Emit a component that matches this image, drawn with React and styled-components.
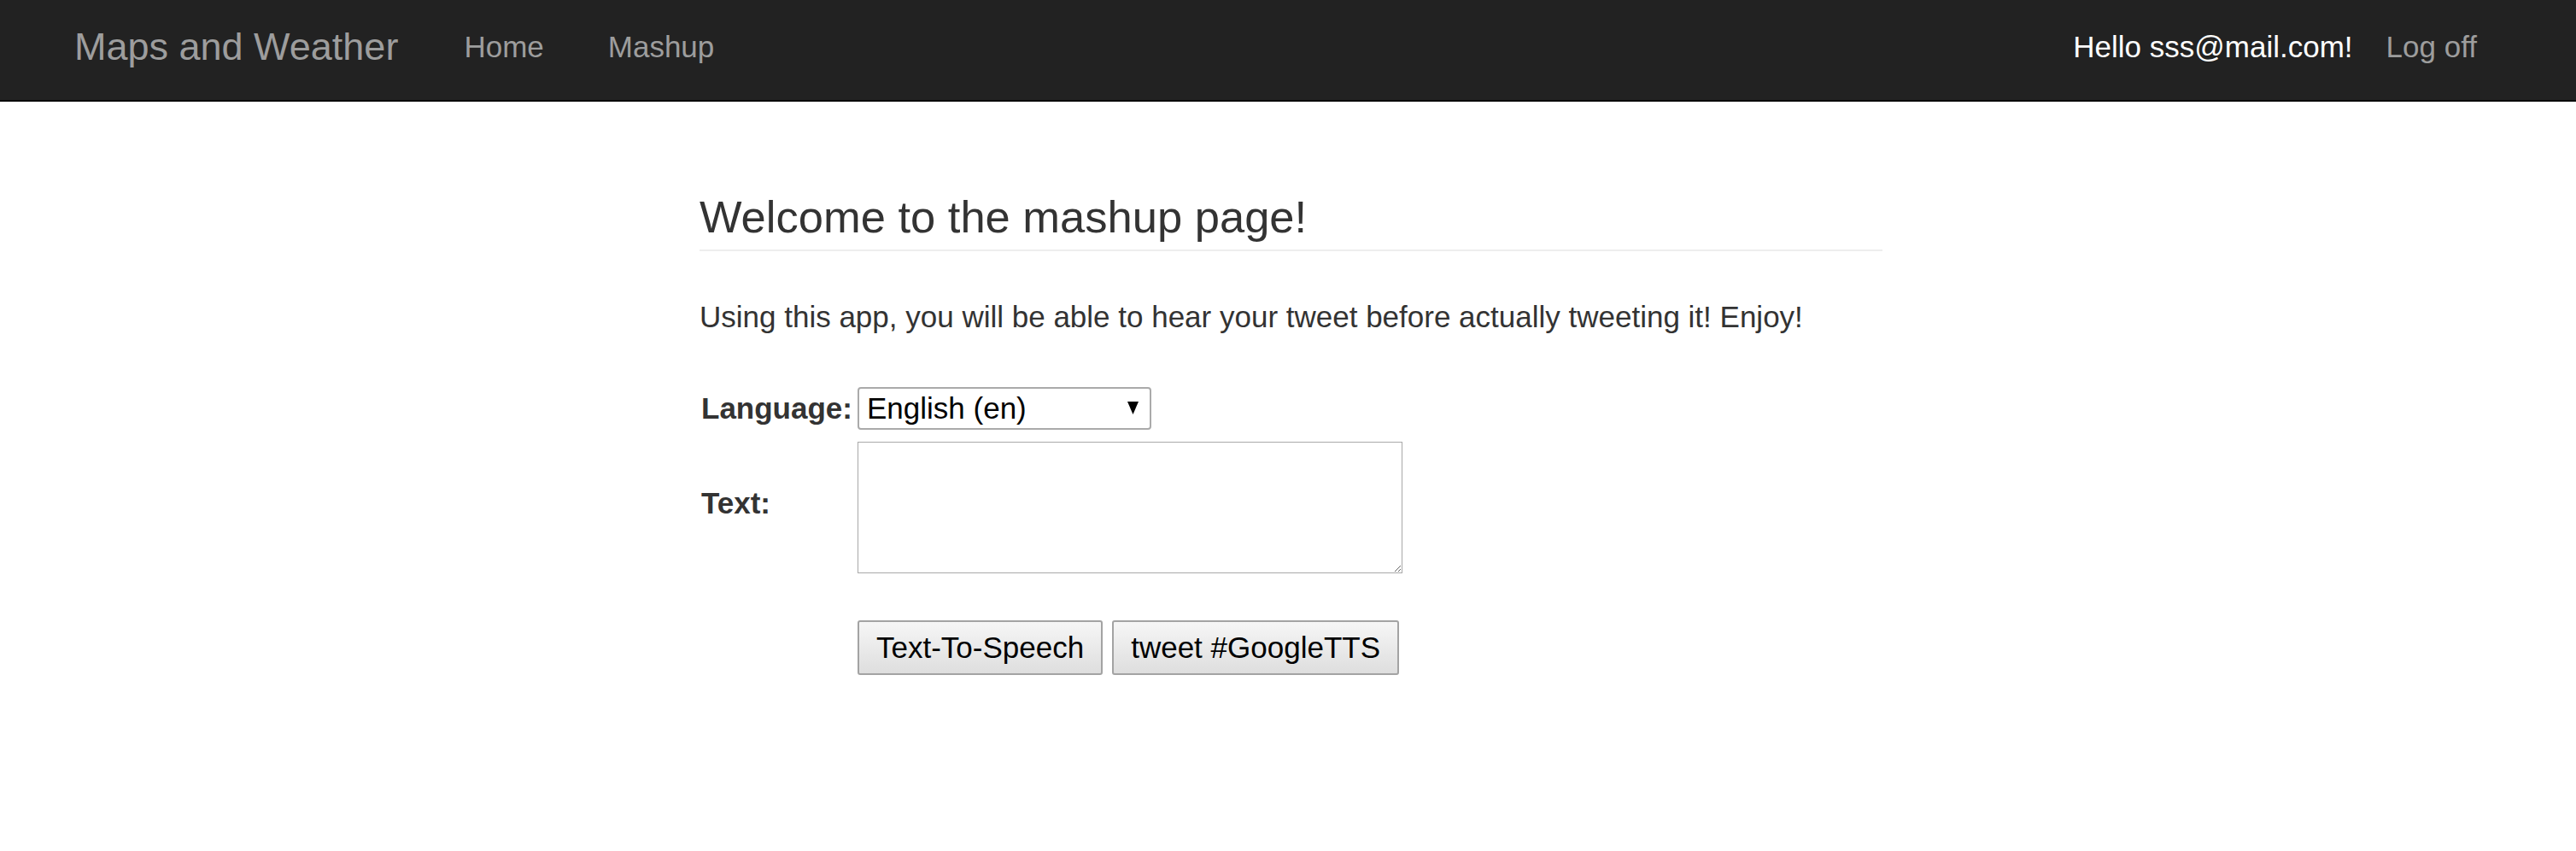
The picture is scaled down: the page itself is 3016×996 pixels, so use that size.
import styled, { createGlobalStyle } from "styled-components";

const GlobalStyle = createGlobalStyle`
  body {
    margin: 0;
    background: #fff;
    color: #333;
    font-family: "Liberation Sans", Arial, sans-serif;
  }
`;

const Navbar = styled.header`
  display: flex;
  align-items: center;
  box-sizing: border-box;
  height: 119px;
  padding: 0 116px 8px 87px;
  background: #222;
  border-bottom: 2px solid #080808;
`;

const Brand = styled.a`
  font-size: 45px;
  color: #9d9d9d;
  text-decoration: none;
  margin-right: 77px;
`;

const NavList = styled.nav`
  display: flex;
  gap: 75px;
`;

const NavLink = styled.a`
  font-size: 35px;
  color: #9d9d9d;
  text-decoration: none;
`;

const UserBox = styled.div`
  display: flex;
  align-items: center;
  gap: 39px;
  margin-left: auto;
`;

const Greeting = styled.span`
  font-size: 35px;
  color: #fff;
`;

const Main = styled.main`
  width: 1385px;
  margin-left: calc(50% - 689px);
`;

const PageHeader = styled.h2`
  margin: 106px 0 0;
  padding-bottom: 9px;
  border-bottom: 2px solid #eee;
  font-size: 52.5px;
  font-weight: 500;
  line-height: 1.1;
  color: #333;
`;

const Intro = styled.p`
  margin: 52px 0 0;
  font-size: 35px;
  line-height: 50px;
`;

const FormGrid = styled.div`
  display: grid;
  grid-template-columns: 183px auto;
  row-gap: 14px;
  align-items: center;
  justify-items: start;
  margin: 57px 0 0 2px;
`;

const Label = styled.label`
  font-size: 35px;
  font-weight: 700;
  line-height: 40px;
  color: #333;
  margin-bottom: ${(p) => p.$lift || 0}px;
`;

const SelectBox = styled.div`
  position: relative;
  width: 344px;
  height: 50px;
`;

const Select = styled.select`
  appearance: none;
  box-sizing: border-box;
  width: 100%;
  height: 100%;
  padding: 0 40px 0 9px;
  border: 2px solid #aaa;
  border-radius: 4px;
  background: #fff;
  font-family: "Liberation Sans", Arial, sans-serif;
  font-size: 35px;
  color: #000;
`;

const Arrow = styled.svg`
  position: absolute;
  right: 15px;
  top: 17px;
  pointer-events: none;
`;

const TextArea = styled.textarea`
  box-sizing: border-box;
  width: 638px;
  height: 154px;
  margin: 0;
  border: 1px solid #a9a9a9;
  font-family: "Liberation Sans", Arial, sans-serif;
  font-size: 35px;
`;

const ButtonRow = styled.div`
  grid-column: 2;
  display: flex;
  gap: 11px;
  margin-top: 41px;
`;

const Button = styled.button`
  box-sizing: border-box;
  height: 64px;
  padding: 0 20px;
  border: 2px solid #a3a3a3;
  border-radius: 3px;
  background: linear-gradient(#f6f6f6, #dedede);
  font-family: "Liberation Sans", Arial, sans-serif;
  font-size: 35px;
  color: #000;
`;

export default function App() {
  return (
    <>
      <GlobalStyle />
      <Navbar>
        <Brand href="#">Maps and Weather</Brand>
        <NavList>
          <NavLink href="#">Home</NavLink>
          <NavLink href="#">Mashup</NavLink>
        </NavList>
        <UserBox>
          <Greeting>Hello sss@mail.com!</Greeting>
          <NavLink href="#">Log off</NavLink>
        </UserBox>
      </Navbar>
      <Main>
        <PageHeader>Welcome to the mashup page!</PageHeader>
        <Intro>
          Using this app, you will be able to hear your tweet before actually tweeting it! Enjoy!
        </Intro>
        <FormGrid>
          <Label htmlFor="lang">Language:</Label>
          <SelectBox>
            <Select id="lang" defaultValue="en">
              <option value="en">English (en)</option>
            </Select>
            <Arrow width="13" height="15" viewBox="0 0 13 15">
              <path d="M0 0 H13 L6.5 15 Z" fill="#000" />
            </Arrow>
          </SelectBox>
          <Label htmlFor="txt" $lift={10}>Text:</Label>
          <TextArea id="txt" />
          <ButtonRow>
            <Button>Text-To-Speech</Button>
            <Button>tweet #GoogleTTS</Button>
          </ButtonRow>
        </FormGrid>
      </Main>
    </>
  );
}
